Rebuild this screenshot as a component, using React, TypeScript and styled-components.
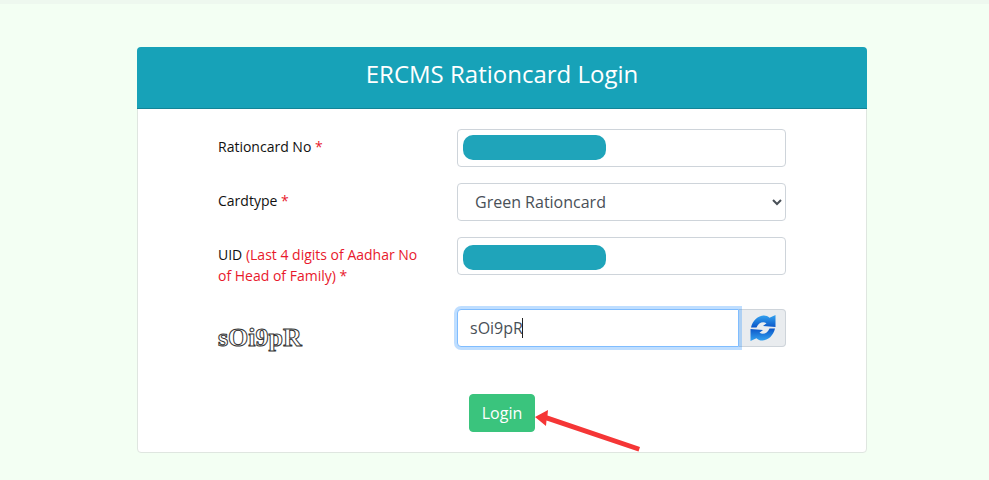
import React from 'react'
import styled, { createGlobalStyle } from 'styled-components'

const GlobalStyle = createGlobalStyle`
  html, body {
    margin: 0;
    padding: 0;
    background: #f3fff3;
    font-family: "Open Sans", "Liberation Sans", sans-serif;
    overflow: hidden;
  }
  * { box-sizing: border-box; }
`

const Page = styled.div`
  height: 480px;
  border-top: 4px solid #eef8ef;
  padding: 43px 122px 0 137px;
`

const Card = styled.form`
  position: relative;
  width: 730px;
  height: 406px;
  background: #fff;
  border: 1px solid #dfe6e0;
  border-radius: 4px;
`

const CardHeader = styled.h1`
  margin: -1px -1px 0;
  height: 62px;
  background: #17a2b8;
  border-bottom: 1px solid #138496;
  border-radius: 4px 4px 0 0;
  color: #fff;
  font-size: 24px;
  font-weight: 400;
  line-height: 54px;
  text-align: center;
`

const CardBody = styled.div`
  display: flex;
  flex-direction: column;
  gap: 16px;
  padding: 20px 80px 0 80px;
`

const Row = styled.div<{ $height?: number }>`
  display: grid;
  grid-template-columns: 239px 329px;
  height: ${({ $height }) => $height || 38}px;
`

const Label = styled.label`
  color: #111;
  font-size: 14px;
  line-height: 21px;
  padding-top: 7px;
`

const Required = styled.span`
  color: #e8192c;
`

const Hint = styled.span`
  display: block;
  width: 205px;
  color: #e8192c;
`

const HintPrefix = styled.span`
  color: #111;
`

const FieldWrap = styled.div`
  position: relative;
  height: 38px;
`

const Input = styled.input`
  display: block;
  width: 100%;
  height: 38px;
  padding: 6px 12px;
  border: 1px solid #ced4da;
  border-radius: 4px;
  background: #fff;
  color: #495057;
  font: 400 16px "Open Sans", "Liberation Sans", sans-serif;
  outline: none;
`

const Select = styled.select`
  display: block;
  width: 100%;
  height: 38px;
  padding: 6px 13px;
  border: 1px solid #ced4da;
  border-radius: 4px;
  background: #fff;
  color: #495057;
  font: 400 16px "Open Sans", "Liberation Sans", sans-serif;
  outline: none;
`

const Redaction = styled.div<{ $top: number }>`
  position: absolute;
  top: ${({ $top }) => $top}px;
  left: 6px;
  width: 143px;
  height: 25px;
  background: #1fa4ba;
  border-radius: 10px;
`

const CaptchaText = styled.div`
  padding-top: 14px;
  color: #fff;
  font-family: "Liberation Serif", "DejaVu Serif", serif;
  font-size: 26px;
  font-weight: 700;
  line-height: 30px;
  opacity: 0.99;
  -webkit-text-stroke: 1px #333;
`

const InputGroup = styled.div`
  display: flex;
  height: 38px;
`

const CaptchaField = styled.div`
  position: relative;
  z-index: 1;
  flex: 1;
`

const FocusedInput = styled(Input)`
  border-color: #80bdff;
  border-radius: 4px 0 0 4px;
  box-shadow: 0 0 0 3px rgba(0, 123, 255, 0.25);
  caret-color: transparent;
`

const Caret = styled.span`
  position: absolute;
  top: 9px;
  left: 65px;
  width: 1px;
  height: 20px;
  background: #222;
`

const Addon = styled.button`
  display: flex;
  align-items: center;
  justify-content: center;
  width: 47px;
  padding: 0 0 0 1px;
  border: 1px solid #ced4da;
  border-left: none;
  border-radius: 0 4px 4px 0;
  background: #e9ecef;
`

const Actions = styled.div`
  display: flex;
  padding: 47px 0 0 251px;
  margin-top: -16px;
`

const LoginButton = styled.button`
  width: 66px;
  height: 38px;
  border: 1px solid #3ac47d;
  border-radius: 4px;
  background: #3ac47d;
  color: #fff;
  font: 400 16px "Open Sans", "Liberation Sans", sans-serif;
`

const Pointer = styled.svg`
  position: absolute;
  left: 392px;
  top: 354px;
`

const arrowPath =
  'M1 12.500 C2.500 5.500 8 0.500 14 0.500 C16 0.500 18 1.400 19.500 2.800 L25.500 0 L25.500 12 L13 11 L16.500 8.200 C13 6 8.500 7.500 6.500 12.500 Z'

function RefreshIcon() {
  return (
    <svg width="26" height="26" viewBox="0 0 26 26">
      <defs>
        <linearGradient id="refreshBlue" x1="0" y1="0" x2="0" y2="1">
          <stop offset="0" stopColor="#35a4f0" />
          <stop offset="1" stopColor="#0a55c8" />
        </linearGradient>
      </defs>
      <path d={arrowPath} fill="url(#refreshBlue)" />
      <path d={arrowPath} fill="url(#refreshBlue)" transform="rotate(180 13 13)" />
    </svg>
  )
}

export default function App() {
  return (
    <>
      <GlobalStyle />
      <Page>
        <Card onSubmit={e => e.preventDefault()}>
          <CardHeader>ERCMS Rationcard Login</CardHeader>
          <CardBody>
            <Row>
              <Label>Rationcard No <Required>*</Required></Label>
              <FieldWrap>
                <Input type="text" readOnly />
                <Redaction $top={6} />
              </FieldWrap>
            </Row>
            <Row>
              <Label>Cardtype <Required>*</Required></Label>
              <FieldWrap>
                <Select defaultValue="green">
                  <option value="green">Green Rationcard</option>
                </Select>
              </FieldWrap>
            </Row>
            <Row $height={56}>
              <Label>
                <Hint>
                  <HintPrefix>UID </HintPrefix>(Last 4 digits of Aadhar No of Head of Family) *
                </Hint>
              </Label>
              <FieldWrap>
                <Input type="text" readOnly />
                <Redaction $top={8} />
              </FieldWrap>
            </Row>
            <Row>
              <CaptchaText>sOi9pR</CaptchaText>
              <InputGroup>
                <CaptchaField>
                  <FocusedInput type="text" defaultValue="sOi9pR" />
                  <Caret />
                </CaptchaField>
                <Addon type="button">
                  <RefreshIcon />
                </Addon>
              </InputGroup>
            </Row>
            <Actions>
              <LoginButton type="submit">Login</LoginButton>
            </Actions>
          </CardBody>
          <Pointer width="112" height="52" viewBox="0 0 112 52">
            <path d="M5 15 L18 8 L17.500 13.500 L110 45 L108.500 49.500 L16.500 18.500 L16 24 Z" fill="#f53636" />
          </Pointer>
        </Card>
      </Page>
    </>
  )
}
